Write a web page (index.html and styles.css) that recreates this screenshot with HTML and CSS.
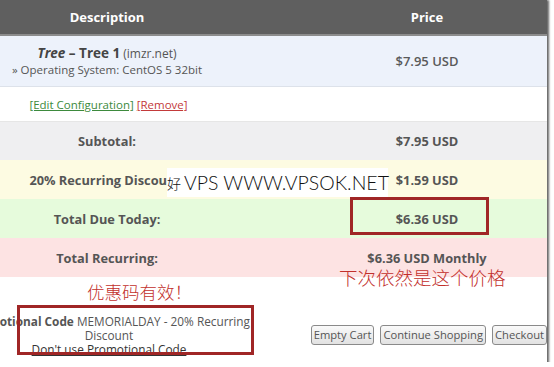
FILE: index.html
```html
<!DOCTYPE html>
<html>
<head>
<meta charset="utf-8">
<link rel="stylesheet" href="styles.css">
</head>
<body>
<div class="shot">
  <div class="cart">
    <div class="row head">
      <div>Description</div>
      <div>Price</div>
    </div>
    <div class="row item">
      <div class="desc"><strong><em>Tree</em> – Tree 1</strong> <span class="dom">(imzr.net)</span><br>» Operating System: CentOS 5 32bit</div>
      <div class="price">$7.95 USD</div>
    </div>
    <div class="row links">
      <div class="linkcell"><a class="edit" href="#">[Edit Configuration]</a> <a class="remove" href="#">[Remove]</a></div>
      <div></div>
    </div>
    <div class="row sum sub">
      <div>Subtotal:</div>
      <div>$7.95 USD</div>
    </div>
    <div class="row sum disc">
      <div>20% Recurring Discount:</div>
      <div>$1.59 USD</div>
    </div>
    <div class="row sum due">
      <div>Total Due Today:</div>
      <div>$6.36 USD</div>
    </div>
    <div class="row sum rec">
      <div>Total Recurring:</div>
      <div>$6.36 USD Monthly</div>
    </div>
    <div class="row foot">
      <div class="promo"><strong>Promotional Code</strong> MEMORIALDAY - 20% Recurring Discount<br><a href="#">Don't use Promotional Code</a></div>
      <div class="btns">
        <button class="b1">Empty Cart</button>
        <button class="b2">Continue Shopping</button>
        <button class="b3">Checkout</button>
      </div>
    </div>
  </div>
  <div class="wm"><span class="hao">好</span>VPS WWW.VPSOK.NET</div>
  <div class="mark box1"></div>
  <div class="mark box2"></div>
  <div class="note cn1">优惠码有效！</div>
  <div class="note cn2">下次依然是这个价格</div>
</div>
</body>
</html>
```

FILE: styles.css
```css
body {
  margin: 0;
  background: #fff;
  font-family: "Open Sans", "Noto Sans", sans-serif;
}
.shot {
  position: relative;
  width: 547px;
  height: 362px;
  overflow: hidden;
  background: #fff;
  box-shadow: 1px 1px 2px 1px rgba(0, 0, 0, 0.6);
}
.cart {
  margin-left: -93px;
  width: 640px;
}
.row {
  display: grid;
  grid-template-columns: 400px 240px;
  align-items: center;
  text-align: center;
  font-size: 11.5px;
  color: #555;
}
.head {
  height: 34px;
  background: #5f5f5f;
  color: #fff;
  font-weight: 700;
  font-size: 13px;
  border-bottom: 2px solid #8c8c8c;
}
.item {
  height: 50px;
  background: #edf2fb;
  border-bottom: 1px solid #dde2ea;
  line-height: 16px;
}
.item .desc strong {
  font-size: 13.5px;
  color: #444;
}
.dom {
  font-size: 12px;
}
.price {
  font-size: 13px;
  font-weight: 600;
  color: #5a5a5a;
}
.links {
  height: 34px;
  border-bottom: 1px solid #e6e6e6;
}
.linkcell {
  padding-left: 3px;
}
.links a {
  text-decoration: underline;
}
.edit {
  color: #3d8a3d;
}
.remove {
  color: #c33a3a;
}
.sum {
  font-weight: 700;
  font-size: 12.8px;
}
.sub {
  height: 38px;
  background: #efeff1;
}
.disc {
  height: 39px;
  background: #fdfbe2;
}
.due {
  height: 39px;
  background: #e6fbdc;
}
.rec {
  height: 39px;
  background: #fde3e3;
}
.foot {
  margin-top: 30px;
  height: 55px;
}
.promo {
  width: 300px;
  margin: 0 auto;
  padding-left: 4px;
  line-height: 14px;
  color: #555;
  font-size: 11.8px;
}
.promo a {
  color: #333;
  text-decoration: underline;
}
.btns {
  display: flex;
  justify-content: flex-end;
  gap: 6px;
}
.btns button {
  height: 20px;
  margin: 0;
  padding: 0 2px;
  white-space: nowrap;
  font-family: "Open Sans", sans-serif;
  font-size: 11.2px;
  color: #555;
  border: 1px solid #8a8a8a;
  border-radius: 3px;
  background: linear-gradient(#fafafa, #e2e2e2);
}
.wm {
  position: absolute;
  left: 167px;
  top: 168px;
  width: 221px;
  height: 29px;
  background: #fff;
  display: flex;
  align-items: center;
  font-family: Lato, sans-serif;
  font-weight: 300;
  font-size: 19.5px;
  color: #111;
  white-space: nowrap;
}
.hao {
  font-family: "Noto Sans CJK SC", sans-serif;
  font-size: 14px;
  margin-right: 3px;
}
.mark {
  position: absolute;
  border: 3px solid #a02626;
  box-sizing: border-box;
}
.box1 {
  left: 350px;
  top: 197px;
  width: 139px;
  height: 38px;
}
.box2 {
  left: 17px;
  top: 305px;
  width: 237px;
  height: 50px;
}
.note {
  position: absolute;
  font-family: "Noto Sans CJK SC", sans-serif;
  font-weight: 300;
  font-size: 17.5px;
  line-height: 20px;
  color: #c2302c;
  white-space: nowrap;
}
.cn1 {
  left: 87px;
  top: 282px;
}
.cn2 {
  left: 339px;
  top: 267px;
  font-size: 18.5px;
}
```
